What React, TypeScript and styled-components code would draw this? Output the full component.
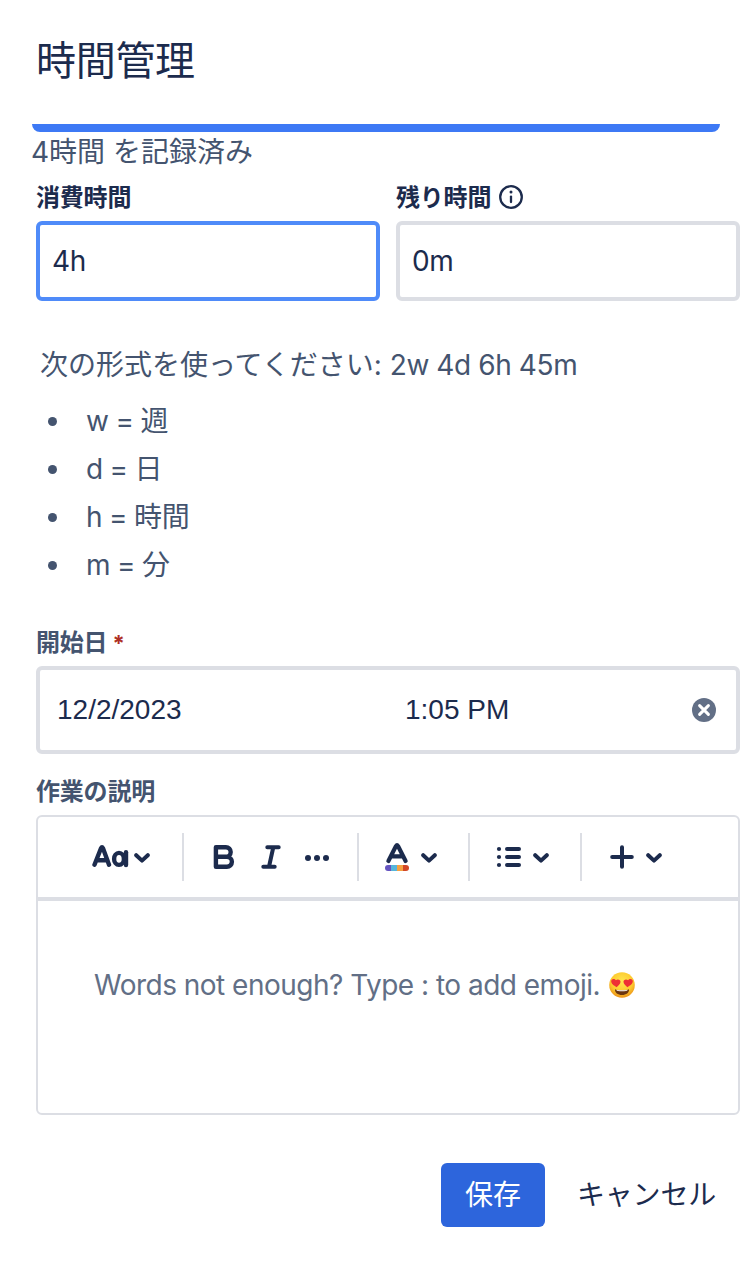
import React from "react";
import styled, { createGlobalStyle } from "styled-components";

const NAVY = "#1c2b4d";
const SLATE = "#44546f";
const LINE = "#dcdee4";

const GlobalStyle = createGlobalStyle`
  * { box-sizing: border-box; }
  body {
    margin: 0;
    background: #fff;
    color: ${SLATE};
    font-family: Inter, "Noto Sans CJK JP", sans-serif;
    font-size: 28px;
  }
`;

const Dialog = styled.main`
  width: 748px;
  height: 1262px;
  padding: 37px 8px 0 36px;
  background: #fff;
  overflow: hidden;
`;

const Title = styled.h1`
  margin: 0;
  height: 48px;
  font-size: 40px;
  line-height: 48px;
  font-weight: 400;
  letter-spacing: -0.3px;
  color: ${NAVY};
`;

const Progress = styled.div`
  width: 688px;
  height: 8px;
  margin: 39px 0 0 -4px;
  border-radius: 0 0 8px 8px;
  background: #3d79f5;
`;

const Logged = styled.p`
  margin: 0 0 0 -5px;
  height: 40px;
  line-height: 40px;
`;

const Columns = styled.div`
  display: grid;
  grid-template-columns: 1fr 1fr;
  gap: 16px;
`;

const Label = styled.label<{ $dark?: boolean; $top?: number }>`
  display: flex;
  align-items: center;
  height: 32px;
  margin-top: ${(p) => p.$top ?? 0}px;
  margin-bottom: 7px;
  font-size: 24px;
  line-height: 32px;
  font-weight: 700;
  letter-spacing: -0.2px;
  color: ${(p) => (p.$dark ? NAVY : SLATE)};
  svg { margin: -2px 0 0 8px; }
`;

const Required = styled.span`
  margin-left: 5px;
  font-size: 22px;
  color: #ae2e24;
`;

const Input = styled.input<{ $focused?: boolean }>`
  display: block;
  width: 100%;
  height: 80px;
  padding: 0 12px;
  border: 4px solid ${(p) => (p.$focused ? "#4f8bf9" : LINE)};
  border-radius: 6px;
  outline: none;
  background: #fff;
  color: ${NAVY};
  font: inherit;
  letter-spacing: -0.3px;
`;

const Hint = styled.p`
  margin: 44px 0 12px 4px;
  height: 40px;
  line-height: 40px;
  white-space: nowrap;
`;

const Example = styled.span`
  letter-spacing: -0.4px;
`;

const Units = styled.ul`
  margin: 0;
  padding: 0 0 0 12px;
  list-style: none;
`;

const Unit = styled.li`
  display: flex;
  align-items: center;
  gap: 29px;
  height: 48px;
  line-height: 48px;
  letter-spacing: -0.3px;
  word-spacing: -0.8px;
  &::before {
    content: "";
    width: 9px;
    height: 9px;
    border-radius: 50%;
    background: ${SLATE};
  }
`;

const DateTime = styled.div`
  display: flex;
  align-items: center;
  height: 88px;
  padding: 0 20px 0 17px;
  border: 4px solid ${LINE};
  border-radius: 6px;
  color: ${NAVY};
  font-family: "Liberation Sans", Arial, sans-serif;
`;

const DateValue = styled.span`
  width: 348px;
`;

const TimeValue = styled.span`
  flex: 1;
`;

const Editor = styled.section`
  height: 300px;
  border: 2px solid ${LINE};
  border-radius: 6px;
`;

const Toolbar = styled.div`
  display: flex;
  align-items: center;
  height: 84px;
  padding-left: 54px;
  border-bottom: 4px solid ${LINE};
`;

const Tool = styled.button<{ $gap?: number }>`
  display: flex;
  align-items: center;
  gap: ${(p) => p.$gap ?? 0}px;
  padding: 0;
  border: 0;
  background: none;
  color: ${NAVY};
  svg { display: block; flex: none; }
`;

const Tools = styled.div`
  display: flex;
  align-items: center;
  gap: 24px;
`;

const Divider = styled.span<{ $before: number; $after: number }>`
  width: 2px;
  height: 48px;
  margin: 0 ${(p) => p.$after}px 0 ${(p) => p.$before}px;
  background: ${LINE};
`;

const Body = styled.div`
  display: flex;
  align-items: center;
  gap: 9px;
  height: 40px;
  margin: 64px 0 0 56px;
  color: #626f86;
  letter-spacing: -0.51px;
  white-space: nowrap;
`;

const Actions = styled.footer`
  display: flex;
  justify-content: flex-end;
  gap: 8px;
  margin-top: 48px;
`;

const Button = styled.button<{ $primary?: boolean }>`
  height: 64px;
  padding: 0 24px;
  border: 0;
  border-radius: 6px;
  background: ${(p) => (p.$primary ? "#2d65dc" : "transparent")};
  color: ${(p) => (p.$primary ? "#fff" : NAVY)};
  font: inherit;
  line-height: 64px;
  letter-spacing: ${(p) => (p.$primary ? 0 : -0.2)}px;
  white-space: nowrap;
`;

type StrokeProps = { w: number; h?: number; children: React.ReactNode };

const Stroke = ({ w, h = 24, children }: StrokeProps) => (
  <svg
    width={w}
    height={h}
    viewBox={`0 0 ${w} ${h}`}
    fill="none"
    stroke="currentColor"
    strokeWidth={4}
    strokeLinecap="round"
    strokeLinejoin="round"
  >
    {children}
  </svg>
);

const Chevron = () => (
  <Stroke w={16}>
    <path d="M2.2 10.2 8 15.6l5.8-5.4" />
  </Stroke>
);

const InfoIcon = () => (
  <svg width="24" height="24" viewBox="0 0 24 24" fill="none" stroke="currentColor">
    <circle cx="12" cy="12" r="10.8" strokeWidth="2.3" />
    <path d="M12 11.6v5.4" strokeWidth="2.3" strokeLinecap="round" />
    <circle cx="12" cy="7" r="1.5" fill="currentColor" stroke="none" />
  </svg>
);

const ClearIcon = () => (
  <svg width="24" height="24" viewBox="0 0 24 24">
    <circle cx="12" cy="12" r="12" fill="#626f86" />
    <path d="m7.6 7.6 8.8 8.8m0-8.8-8.8 8.8" stroke="#fff" strokeWidth="3" strokeLinecap="round" />
  </svg>
);

const HeartEyes = () => (
  <svg width="26" height="26" viewBox="0 0 26 26">
    <defs>
      <radialGradient id="face" cx="0.5" cy="0.35" r="0.65">
        <stop offset="0" stopColor="#ffe64f" />
        <stop offset="0.65" stopColor="#fdc92f" />
        <stop offset="1" stopColor="#ec9218" />
      </radialGradient>
    </defs>
    <circle cx="13" cy="13" r="12.8" fill="url(#face)" />
    <path d="M6 17.2c2.2 1.3 11.8 1.3 14 0 .4 3.4-2.8 5.8-7 5.8s-7.4-2.400-7-5.800Z" fill="#6b3510" />
    <path d="M7.400 17.800c2.600.7 8.600.7 11.200 0 0 .6-.6 1.100-1.600 1.200-2.400.3-5.600.3-8 0-1-.1-1.600-.6-1.600-1.200Z" fill="#fff" />
    <path d="M7.600 15.200C4.800 13.600 2 11.700 2.200 9.100c.2-2.300 3.300-3 4.700-.8 1.800-1.900 4.900-.6 4.600 1.700-.2 2-2.200 3.600-3.900 5.200Z" fill="#ee2f35" />
    <path d="M18.400 15.200c2.800-1.600 5.600-3.500 5.400-6.100-.2-2.300-3.300-3-4.700-.8-1.800-1.900-4.900-.6-4.600 1.700.2 2 2.200 3.600 3.900 5.200Z" fill="#ee2f35" />
  </svg>
);

export default function App() {
  return (
    <>
      <GlobalStyle />
      <Dialog>
        <Title>時間管理</Title>
        <Progress />
        <Logged>4時間 を記録済み</Logged>
        <Columns>
          <div>
            <Label $dark $top={10}>消費時間</Label>
            <Input $focused defaultValue="4h" />
          </div>
          <div>
            <Label $dark $top={10}>
              残り時間
              <InfoIcon />
            </Label>
            <Input defaultValue="0m" />
          </div>
        </Columns>
        <Hint>
          次の形式を使ってください: <Example>2w 4d 6h 45m</Example>
        </Hint>
        <Units>
          <Unit>w = 週</Unit>
          <Unit>d = 日</Unit>
          <Unit>h = 時間</Unit>
          <Unit>m = 分</Unit>
        </Units>
        <Label $top={38}>
          開始日
          <Required>*</Required>
        </Label>
        <DateTime>
          <DateValue>12/2/2023</DateValue>
          <TimeValue>1:05 PM</TimeValue>
          <ClearIcon />
        </DateTime>
        <Label $top={22}>作業の説明</Label>
        <Editor>
          <Toolbar>
            <Tool $gap={4} aria-label="Text styles">
              <Stroke w={38}>
                <path strokeWidth={4.4} d="M2.500 19.800 9 3.200q1-1.800 2 0L17 19.800M5 15.200h10" />
                <ellipse cx="27" cy="13.900" rx="4.900" ry="6" strokeWidth={4.400} />
                <path d="M34 7.300V20" strokeWidth={4.400} />
              </Stroke>
              <Chevron />
            </Tool>
            <Divider $before={32} $after={29} />
            <Tools>
              <Tool aria-label="Bold">
                <Stroke w={24}>
                  <path
                    strokeWidth={4.400}
                    d="M2.900 2.200h10a4.800 4.800 0 0 1 0 9.600H2.900zM2.900 11.800h11a5 5 0 0 1 0 10H2.900z"
                  />
                </Stroke>
              </Tool>
              <Tool aria-label="Italic">
                <Stroke w={20}>
                  <path d="M6.300 2.200H17.700M2.300 21.800h11.400M12.300 2.200 8 21.800" />
                </Stroke>
              </Tool>
              <Tool aria-label="More formatting">
                <svg width="26" height="24" viewBox="0 0 26 24" fill="currentColor">
                  <circle cx="3" cy="13" r="3" />
                  <circle cx="12" cy="13" r="3" />
                  <circle cx="21" cy="13" r="3" />
                </svg>
              </Tool>
            </Tools>
            <Divider $before={26} $after={26} />
            <Tool $gap={12} aria-label="Text color">
              <Stroke w={24} h={28}>
                <path d="M3.400 18 11 3q1-1.600 2 0L20.600 18M6.500 13.400h11" strokeWidth={4.200} />
                <g stroke="none">
                  <path d="M6 22v6H3a3 3 0 0 1 0-6z" fill="#6554c0" />
                  <path d="M6 22h6v6H6z" fill="#56b5da" />
                  <path d="M12 22h6v6h-6z" fill="#f5a142" />
                  <path d="M18 22h3a3 3 0 0 1 0 6h-3z" fill="#d24827" />
                </g>
              </Stroke>
              <Chevron />
            </Tool>
            <Divider $before={31} $after={26} />
            <Tool $gap={11} aria-label="Lists">
              <Stroke w={26}>
                <path d="M11 4h12M11 12h12M11 20h12" />
                <g fill="currentColor" stroke="none">
                  <circle cx="3" cy="4" r="2.100" />
                  <circle cx="3" cy="12" r="2.100" />
                  <circle cx="3" cy="20" r="2.100" />
                </g>
              </Stroke>
              <Chevron />
            </Tool>
            <Divider $before={31} $after={28} />
            <Tool $gap={12} aria-label="Insert">
              <Stroke w={24}>
                <path d="M12 2.200v19.600M2.200 12h19.600" />
              </Stroke>
              <Chevron />
            </Tool>
          </Toolbar>
          <Body>
            <span>Words not enough? Type : to add emoji.</span>
            <HeartEyes />
          </Body>
        </Editor>
        <Actions>
          <Button $primary>保存</Button>
          <Button>キャンセル</Button>
        </Actions>
      </Dialog>
    </>
  );
}
